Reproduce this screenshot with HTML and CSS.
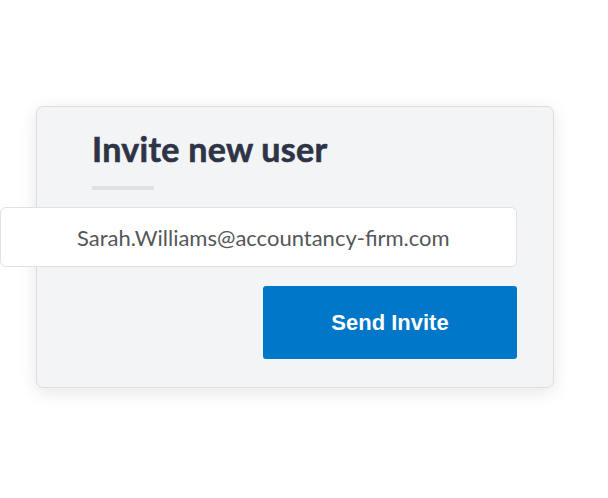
FILE: index.html
```html
<!DOCTYPE html>
<html>
<head>
<meta charset="utf-8">
<link rel="stylesheet" href="styles.css">
</head>
<body>
<div class="page">
  <div class="card">
    <h1 class="title">Invite new user</h1>
    <div class="rule"></div>
    <div class="field">Sarah.Williams@accountancy-firm.com</div>
    <div class="actions">
      <button class="send">Send Invite</button>
    </div>
  </div>
</div>
</body>
</html>
```
FILE: styles.css
```css
html, body {
  margin: 0;
  padding: 0;
  background: #ffffff;
}
.page {
  width: 608px;
  height: 498px;
  padding-top: 106px;
  box-sizing: border-box;
}
.card {
  margin-left: 36px;
  width: 518px;
  height: 282px;
  box-sizing: border-box;
  background: #f3f4f6;
  border: 1px solid #dcdde0;
  border-radius: 7px;
  box-shadow: 0 4px 18px rgba(0, 0, 0, 0.10);
  display: flex;
  flex-direction: column;
}
.title {
  margin: 0;
  padding: 22px 0 0 55px;
  font-family: Lato, "Liberation Sans", sans-serif;
  font-weight: 700;
  font-size: 34px;
  line-height: 40px;
  letter-spacing: 0.3px;
  -webkit-text-stroke: 0.6px #2e3445;
  color: #2e3445;
}
.rule {
  margin: 17px 0 0 55px;
  width: 62px;
  height: 4px;
  background: #e0e1e5;
}
.field {
  margin: 17px 36px 0 -37px;
  height: 60px;
  box-sizing: border-box;
  background: #ffffff;
  border: 1px solid #e0e1e4;
  border-radius: 6px;
  padding-left: 76px;
  display: flex;
  align-items: center;
  font-family: Lato, "Liberation Sans", sans-serif;
  font-size: 22px;
  color: #555759;
}
.actions {
  display: flex;
  justify-content: flex-end;
  padding: 19px 36px 0 0;
}
.send {
  width: 254px;
  height: 73px;
  border: none;
  border-radius: 3px;
  background: #0077c8;
  color: #ffffff;
  font-family: "Liberation Sans", Arial, sans-serif;
  font-weight: 700;
  font-size: 22px;
  padding: 0;
}
```
